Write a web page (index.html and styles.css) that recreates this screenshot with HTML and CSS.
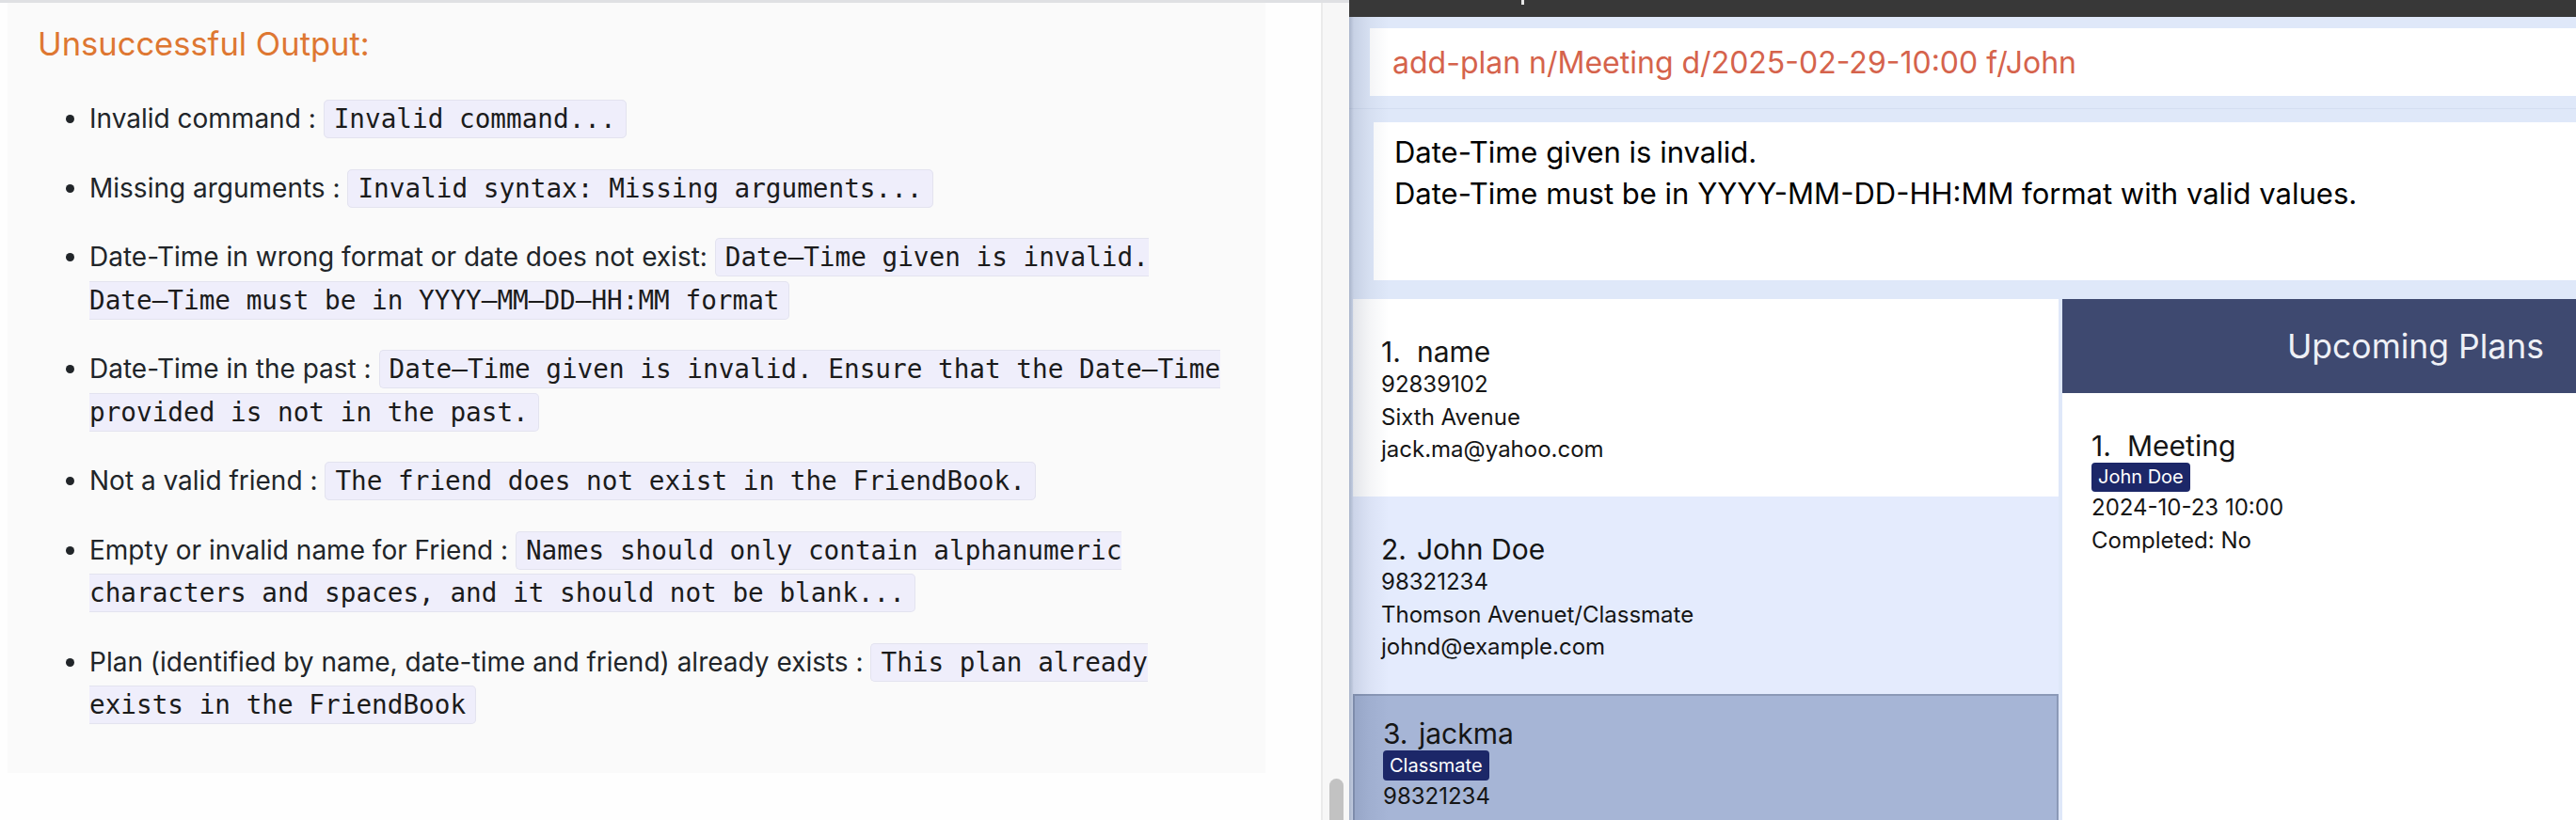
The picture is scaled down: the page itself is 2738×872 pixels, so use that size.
FILE: index.html
```html
<!DOCTYPE html>
<html lang="en">
<head>
<meta charset="utf-8">
<title>FriendBook – Unsuccessful Output</title>
<link rel="stylesheet" href="styles.css">
</head>
<body>
<div class="page">
  <section class="doc-area">
    <div class="doc">
      <article class="doc-box">
        <h4 class="doc-heading">Unsuccessful Output:</h4>
        <ul class="doc-list">
          <li>Invalid command : <code>Invalid command...</code></li>
          <li>Missing arguments : <code>Invalid syntax: Missing arguments...</code></li>
          <li>Date-Time in wrong format or date does not exist: <code><span class="nw">Date–Time</span> given is invalid. <span class="nw">Date–Time</span> must be in <span class="nw">YYYY–MM–DD–HH:MM</span> format</code></li>
          <li>Date-Time in the past : <code><span class="nw">Date–Time</span> given is invalid. Ensure that the <span class="nw">Date–Time</span> provided is not in the past.</code></li>
          <li>Not a valid friend : <code>The friend does not exist in the FriendBook.</code></li>
          <li>Empty or invalid name for Friend : <code>Names should only contain alphanumeric characters and spaces, and it should not be blank...</code></li>
          <li>Plan (identified by name, date-time and friend) already exists : <code>This plan already exists in the FriendBook</code></li>
        </ul>
      </article>
    </div>
    <div class="scroll-track"><div class="scroll-thumb"></div></div>
  </section>

  <section class="app">
    <div class="titlebar"><span class="title-tick"></span></div>
    <div class="cmd">add-plan n/Meeting d/2025-02-29-10:00 f/John</div>
    <div class="result-wrap">
      <div class="result">
        <div>Date-Time given is invalid.</div>
        <div>Date-Time must be in YYYY-MM-DD-HH:MM format with valid values.</div>
      </div>
    </div>
    <div class="split">
      <div class="person-list">
        <div class="card">
          <div class="card-name"><span class="card-index">1.</span>name</div>
          <div class="card-line">92839102</div>
          <div class="card-line">Sixth Avenue</div>
          <div class="card-line">jack.ma@yahoo.com</div>
        </div>
        <div class="card card--alt">
          <div class="card-name"><span class="card-index">2.</span>John Doe</div>
          <div class="card-line">98321234</div>
          <div class="card-line">Thomson Avenuet/Classmate</div>
          <div class="card-line">johnd@example.com</div>
        </div>
        <div class="card card--selected">
          <div class="card-name"><span class="card-index">3.</span>jackma</div>
          <div class="tags"><span class="tag">Classmate</span></div>
          <div class="card-line">98321234</div>
          <div class="card-line">Thomson Avenue</div>
        </div>
      </div>
      <div class="plans">
        <div class="plans-header">Upcoming Plans</div>
        <div class="plan">
          <div class="card-name"><span class="card-index">1.</span>Meeting</div>
          <div class="tags"><span class="tag">John Doe</span></div>
          <div class="card-line">2024-10-23 10:00</div>
          <div class="card-line">Completed: No</div>
        </div>
      </div>
    </div>
  </section>
</div>
</body>
</html>
```

FILE: styles.css
```css
html, body {
  margin: 0;
  padding: 0;
}

body {
  width: 2738px;
  height: 872px;
  overflow: hidden;
  background: #fefefe;
  font-family: Inter, "Noto Sans", sans-serif;
}

.page {
  display: flex;
  height: 872px;
}

/* ---------- documentation side ---------- */
.doc-area {
  width: 1434px;
  flex: none;
  display: flex;
  border-top: 3px solid #dfe0e3;
  box-sizing: border-box;
  height: 872px;
}

.doc {
  width: 1404px;
  flex: none;
  padding-left: 8px;
  box-sizing: border-box;
}

.doc-box {
  width: 1337px;
  height: 819px;
  box-sizing: border-box;
  background: #fafafa;
  padding: 22px 28px 0 32px;
}

.doc-heading {
  margin: 0;
  font-size: 34.5px;
  line-height: 44px;
  font-weight: 400;
  color: #de7732;
}

.doc-list {
  margin: 35px 0 0;
  padding-left: 55px;
  font-size: 28px;
  line-height: 45.5px;
  color: #212529;
}

.doc-list li {
  margin-bottom: 28px;
}

.doc-list code {
  font-family: "DejaVu Sans Mono", "Liberation Mono", monospace;
  font-size: 27.7px;
  line-height: 1;
  color: #1b1b1b;
  background: #efeefb;
  border: 1px solid #e3e3ef;
  border-radius: 5px;
  padding: 3px 10px;
}

.nw {
  white-space: nowrap;
}

.scroll-track {
  width: 30px;
  flex: none;
  border-left: 2px solid #ebebeb;
  background: #f7f7f7;
  box-sizing: border-box;
  display: flex;
  flex-direction: column;
  justify-content: flex-end;
  align-items: center;
}

.scroll-thumb {
  width: 15px;
  height: 52px;
  margin-bottom: -8px;
  background: #c2c2c2;
  border-radius: 8px;
}

/* ---------- application side ---------- */
.app {
  flex: 1;
  min-width: 0;
  display: flex;
  flex-direction: column;
  background: #dfe8f9;
  position: relative;
  color: #141414;
  overflow: hidden;
}

.app::after {
  content: "";
  position: absolute;
  left: 0;
  top: 18px;
  bottom: 0;
  width: 42px;
  pointer-events: none;
  background: linear-gradient(to right,
    rgba(45, 60, 95, 0.30) 0,
    rgba(45, 60, 95, 0.13) 5px,
    rgba(45, 60, 95, 0.05) 22px,
    rgba(45, 60, 95, 0) 42px);
}

.titlebar {
  height: 18px;
  flex: none;
  background: #383838;
  padding-left: 183px;
  display: flex;
  align-items: flex-start;
}

.title-tick {
  width: 3px;
  height: 5px;
  background: #e6e6e6;
}

.cmd {
  margin: 12px 0 0 22px;
  height: 72px;
  flex: none;
  background: #fff;
  display: flex;
  align-items: center;
  padding-left: 24px;
  font-size: 32px;
  color: #d5634c;
}

.result-wrap {
  margin-top: 13px;
  border-top: 1px solid #d4def1;
  padding: 14px 0 0 26px;
  flex: none;
}

.result {
  height: 168px;
  box-sizing: border-box;
  background: #fff;
  padding: 10px 22px;
  font-size: 31px;
  line-height: 44px;
  color: #000;
}

.split {
  margin-top: 20px;
  flex: 1;
  min-height: 0;
  display: flex;
  gap: 4px;
  padding-left: 4px;
  overflow: hidden;
}

.person-list {
  width: 750px;
  flex: none;
  display: flex;
  flex-direction: column;
  overflow: hidden;
}

.card {
  height: 210px;
  flex: none;
  box-sizing: border-box;
  padding: 38px 30px 0;
  background: #fff;
}

.card--alt {
  background: #e4ebfd;
}

.card--selected {
  background: #a6b5d6;
  border: 2px solid #8b99b7;
  padding-top: 22px;
}

.card-name {
  font-size: 30px;
  line-height: 36px;
  color: #151515;
}

.card-index {
  display: inline-block;
  width: 38px;
}

.card-line {
  font-size: 24px;
  line-height: 34.5px;
  color: #151515;
}

.tags {
  display: flex;
}

.tag {
  background: #1c2768;
  color: #fff;
  font-size: 20px;
  line-height: 32px;
  padding: 0 7px;
  border-radius: 4px;
}

.plans {
  flex: 1;
  min-width: 0;
  background: #fff;
  display: flex;
  flex-direction: column;
}

.plans-header {
  height: 100px;
  flex: none;
  background: #3e4970;
  color: #eef0f6;
  font-size: 35.5px;
  display: flex;
  align-items: center;
  justify-content: flex-end;
  padding-right: 34px;
}

.plan {
  padding: 38px 31px 0;
}

.plan .tag {
  line-height: 31px;
}
```
